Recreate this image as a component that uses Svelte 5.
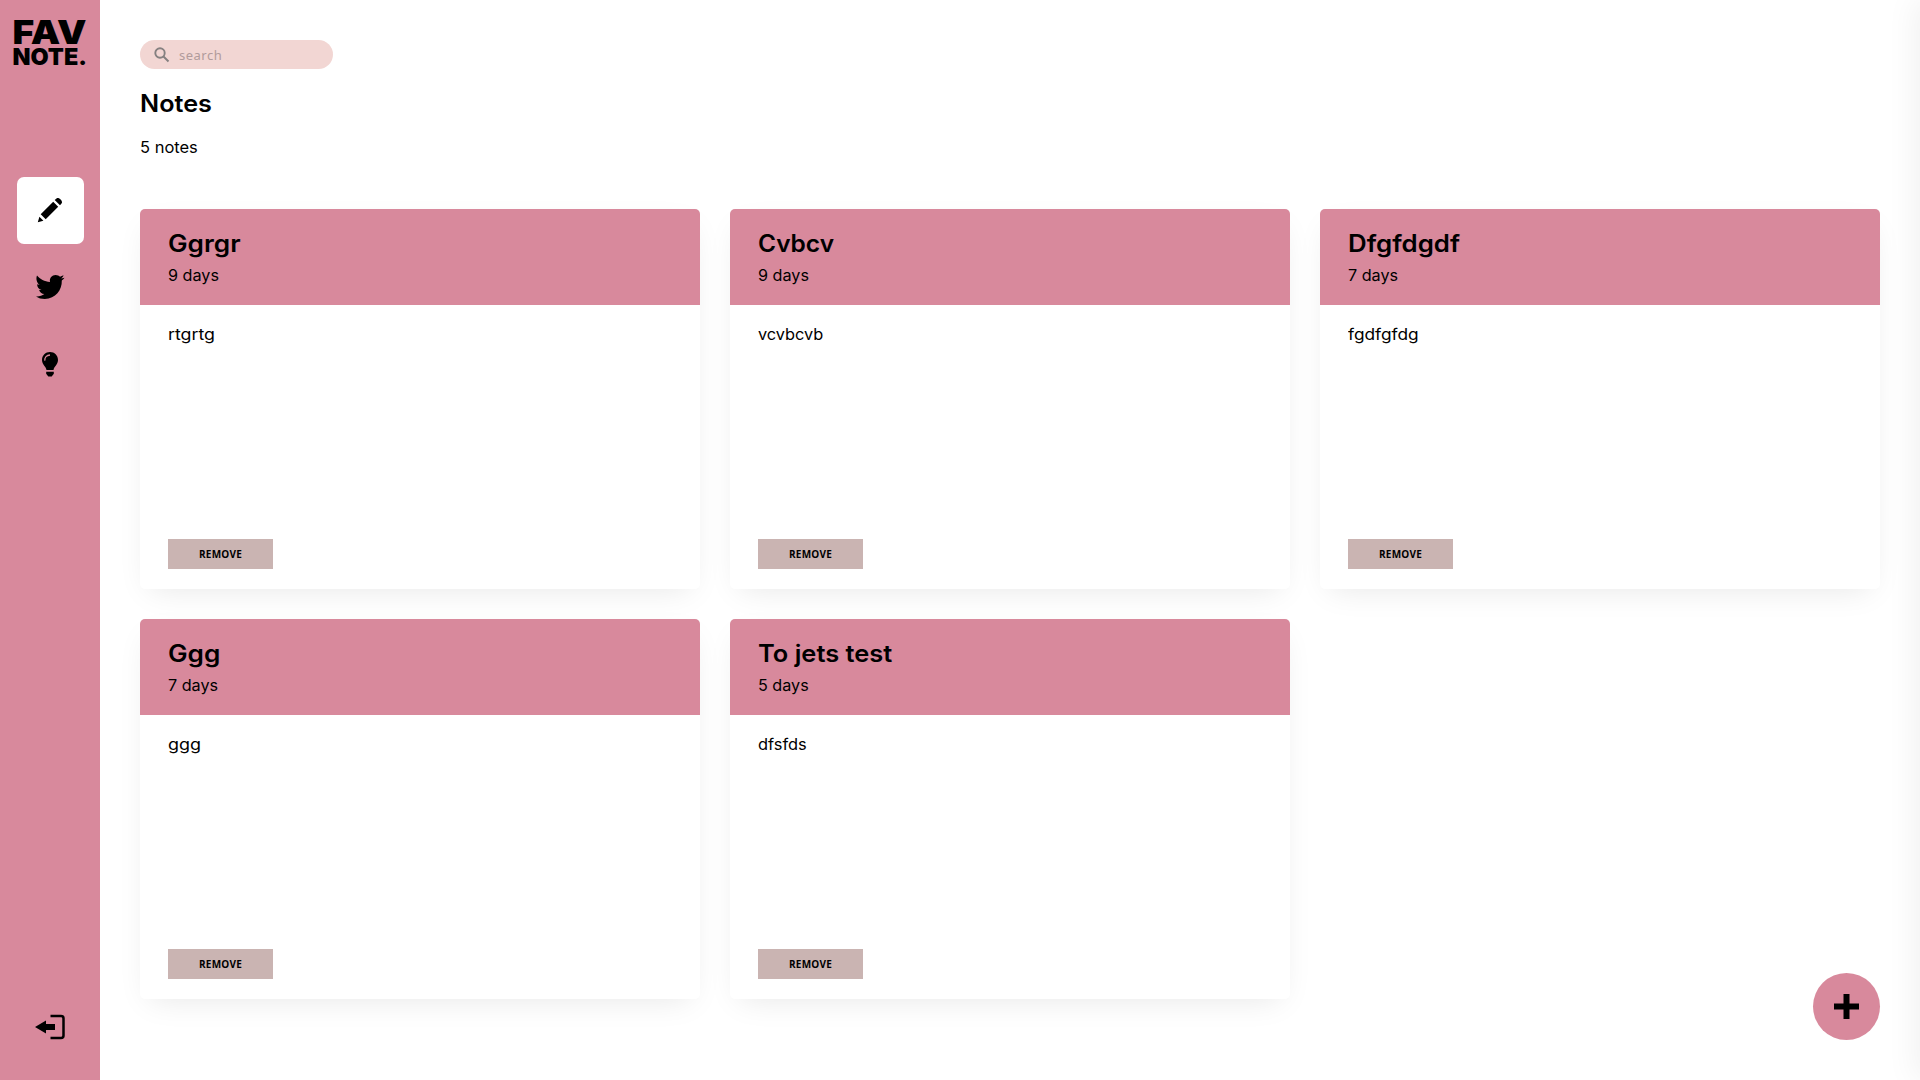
<script>
  // titleStretch and textStretch widen the letterforms of each string
  const notes = [
    { title: 'Ggrgr', age: '9 days', text: 'rtgrtg', titleStretch: 1.09, textStretch: 1.11 },
    { title: 'Cvbcv', age: '9 days', text: 'vcvbcvb', titleStretch: 1.02, textStretch: 1.02 },
    { title: 'Dfgfdgdf', age: '7 days', text: 'fgdfgfdg', titleStretch: 1.075, textStretch: 1.08 },
    { title: 'Ggg', age: '7 days', text: 'ggg', titleStretch: 1.09, textStretch: 1.12 },
    { title: 'To jets test', age: '5 days', text: 'dfsfds', titleStretch: 1.06, textStretch: 1.025 },
  ];
</script>

<div class="page">
  <aside class="sidebar">
    <div class="logo">
      <svg width="74" height="25" viewBox="0 0 74 25">
        <text x="-0.500" y="24" font-size="33" textLength="74" lengthAdjust="spacingAndGlyphs">FAV</text>
      </svg>
      <svg width="74" height="21" viewBox="0 0 74 21">
        <text x="-0.500" y="20" font-size="23" textLength="74.500" lengthAdjust="spacingAndGlyphs">NOTE.</text>
      </svg>
    </div>
    <nav>
      <a class="item active" href="#notes" aria-label="Notes">
        <svg width="26" height="26" viewBox="0 0 26 26">
          <path d="M.8 25.200 2.400 19.800 6.400 23.800ZM3.700 17.300 16.200 4.800 21.200 9.800 8.700 22.300ZM17.700 3 19.800 1.300C21.800-.2 26.200 4.200 24.700 6.200L23 8.300Z" />
        </svg>
      </a>
      <a class="item" href="#twitters" aria-label="Twitters">
        <svg width="30" height="26" viewBox="0 0 30 26">
          <path d="M2 1.400C5 5 9.500 7.600 15 7.900C14.200 4.200 17 1 20.600 1C22.400 1 24 1.700 25 2.800L28.500 1.300C28.200 2.600 27.300 3.700 26.200 4.400L29.500 3.700C28.800 4.900 27.900 5.800 26.800 6.600C27.200 16 20.500 25 9.800 25C6.500 25 3.400 24.200 1 22.500C4.100 22.700 7.200 21.900 9.300 20.100C6.700 20 4.800 18.300 4.100 16.100H6.600C3.900 15.300 2.100 13 2.100 10.200L4.700 10.900C1.900 8.900 .6 5 2 1.400Z" />
        </svg>
      </a>
      <a class="item" href="#articles" aria-label="Articles">
        <svg width="18" height="27" viewBox="0 0 18 27">
          <path d="M9 1C4.500 1 1 4.500 1 9c0 4.500 4 6.500 4.500 10h7C13 15.500 17 13.500 17 9c0-4.500-3.500-8-8-8Z" />
          <path d="M3.800 9.600C3.500 6.300 5.600 4.200 9 4" class="shine" />
          <path d="M5.200 20.700h7.600v2.100L10.700 25.600H7.300L5.200 22.800Z" />
        </svg>
      </a>
    </nav>
    <a class="item logout" href="#logout" aria-label="Log out">
      <svg width="32" height="26" viewBox="0 0 32 26">
        <path d="M1 13 12 6.500V10H21V16H12V19.500Z" />
        <path class="frame" d="M16.500 2H27Q29.500 2 29.500 4.500V21.500Q29.500 24 27 24H16.500" />
      </svg>
    </a>
  </aside>

  <main>
    <label class="search">
      <svg width="16" height="16" viewBox="0 0 16 16">
        <circle cx="6" cy="6" r="4.700" />
        <path d="M9.500 9.500 14.500 14.500" />
      </svg>
      <input placeholder="search" />
    </label>
    <h1>Notes</h1>
    <p class="count">5 notes</p>
    <section class="grid">
      {#each notes as note}
        <article>
          <header>
            <h2 style:--stretch={note.titleStretch}>{note.title}</h2>
            <p>{note.age}</p>
          </header>
          <div class="body">
            <p style:--stretch={note.textStretch}>{note.text}</p>
            <button class="remove">Remove</button>
          </div>
        </article>
      {/each}
    </section>
  </main>

  <button class="add" aria-label="Add note">
    <svg width="25" height="25" viewBox="0 0 25 25"><path d="M9.500 0h6v9.500H25v6H15.500V25h-6V15.500H0v-6H9.500Z" /></svg>
  </button>
  <div class="panel"></div>
</div>

<style>
  :global(body) { margin: 0; overflow: hidden; }
  * { box-sizing: border-box; }
  .page {
    display: flex;
    position: relative;
    height: 1080px;
    overflow: hidden;
    background: #fff;
    color: #000;
    font-family: Inter, sans-serif;
    font-size: 16px;
  }
  .sidebar {
    width: 100px;
    flex: none;
    background: #d8899c;
    display: flex;
    flex-direction: column;
    align-items: center;
    padding: 20px 0 19px;
  }
  .logo { flex: none; height: 48px; display: flex; flex-direction: column; }
  .logo text { font-family: Inter, sans-serif; font-weight: 900; }
  .logo svg { overflow: visible; }
  nav { margin-top: 109px; display: flex; flex-direction: column; gap: 10px; padding-left: 1px; }
  .item {
    width: 67px;
    height: 67px;
    padding: 0 1px 1px 0;
    border-radius: 7px;
    display: flex;
    align-items: center;
    justify-content: center;
  }
  .active { background: #fff; }
  .shine { fill: none; stroke: #d8899c; stroke-width: 1.3; }
  .logout { margin-top: auto; padding-right: 0; }
  .frame { fill: none; stroke: #000; stroke-width: 2.5; }
  main { flex: 1; padding: 40px 40px 0; }
  .search {
    display: flex;
    align-items: center;
    width: 193px;
    height: 29px;
    padding-left: 14px;
    border-radius: 15px;
    background: #f2d6d3;
  }
  .search svg { flex: none; fill: none; stroke: #858080; stroke-width: 1.9; }
  .search input {
    width: 130px;
    margin-left: 9px;
    padding: 0;
    border: 0;
    outline: 0;
    background: none;
    font: 13px 'Noto Sans', sans-serif;
    letter-spacing: 0.5px;
  }
  .search input::placeholder { color: #b19b9b; opacity: 1; }
  h1, h2, p { margin: 0; transform: scaleX(var(--stretch, 1)); transform-origin: left; }
  h1, h2 { font-size: 24px; line-height: 30px; font-weight: 600; }
  h1 { --stretch: 1.05; margin-top: 20px; }
  .count { --stretch: 1.03; margin-top: 18px; line-height: 20px; }
  .grid {
    display: grid;
    grid-template-columns: repeat(3, 560px);
    grid-auto-rows: 380px;
    gap: 30px;
    margin-top: 52px;
  }
  article {
    display: flex;
    flex-direction: column;
    border-radius: 5px;
    overflow: hidden;
    background: #fff;
    box-shadow: 0 10px 30px -10px rgba(0, 0, 0, 0.1);
  }
  header { height: 96px; padding: 20px 28px 0; background: #d8899c; }
  header p { --stretch: 1.01; margin-top: 6px; line-height: 20px; }
  .body {
    flex: 1;
    display: flex;
    flex-direction: column;
    align-items: flex-start;
    justify-content: space-between;
    padding: 19px 28px 20px;
    line-height: 20px;
  }
  .remove {
    width: 105px;
    height: 30px;
    padding: 0;
    border: 0;
    background: #cab4b2;
    font: 700 10px 'Open Sans', sans-serif;
    letter-spacing: 0.2px;
    text-transform: uppercase;
    color: #000;
  }
  .add {
    position: absolute;
    right: 40px;
    bottom: 40px;
    width: 67px;
    height: 67px;
    padding: 0;
    border: 0;
    border-radius: 50%;
    background: #d8899c;
    display: flex;
    align-items: center;
    justify-content: center;
  }
  /* closed drawer, parked past the right edge so only its shadow shows */
  .panel {
    position: absolute;
    top: 0;
    left: 100%;
    width: 600px;
    height: 100%;
    box-shadow: -5px 0 30px rgba(0, 0, 0, 0.06);
  }
</style>
